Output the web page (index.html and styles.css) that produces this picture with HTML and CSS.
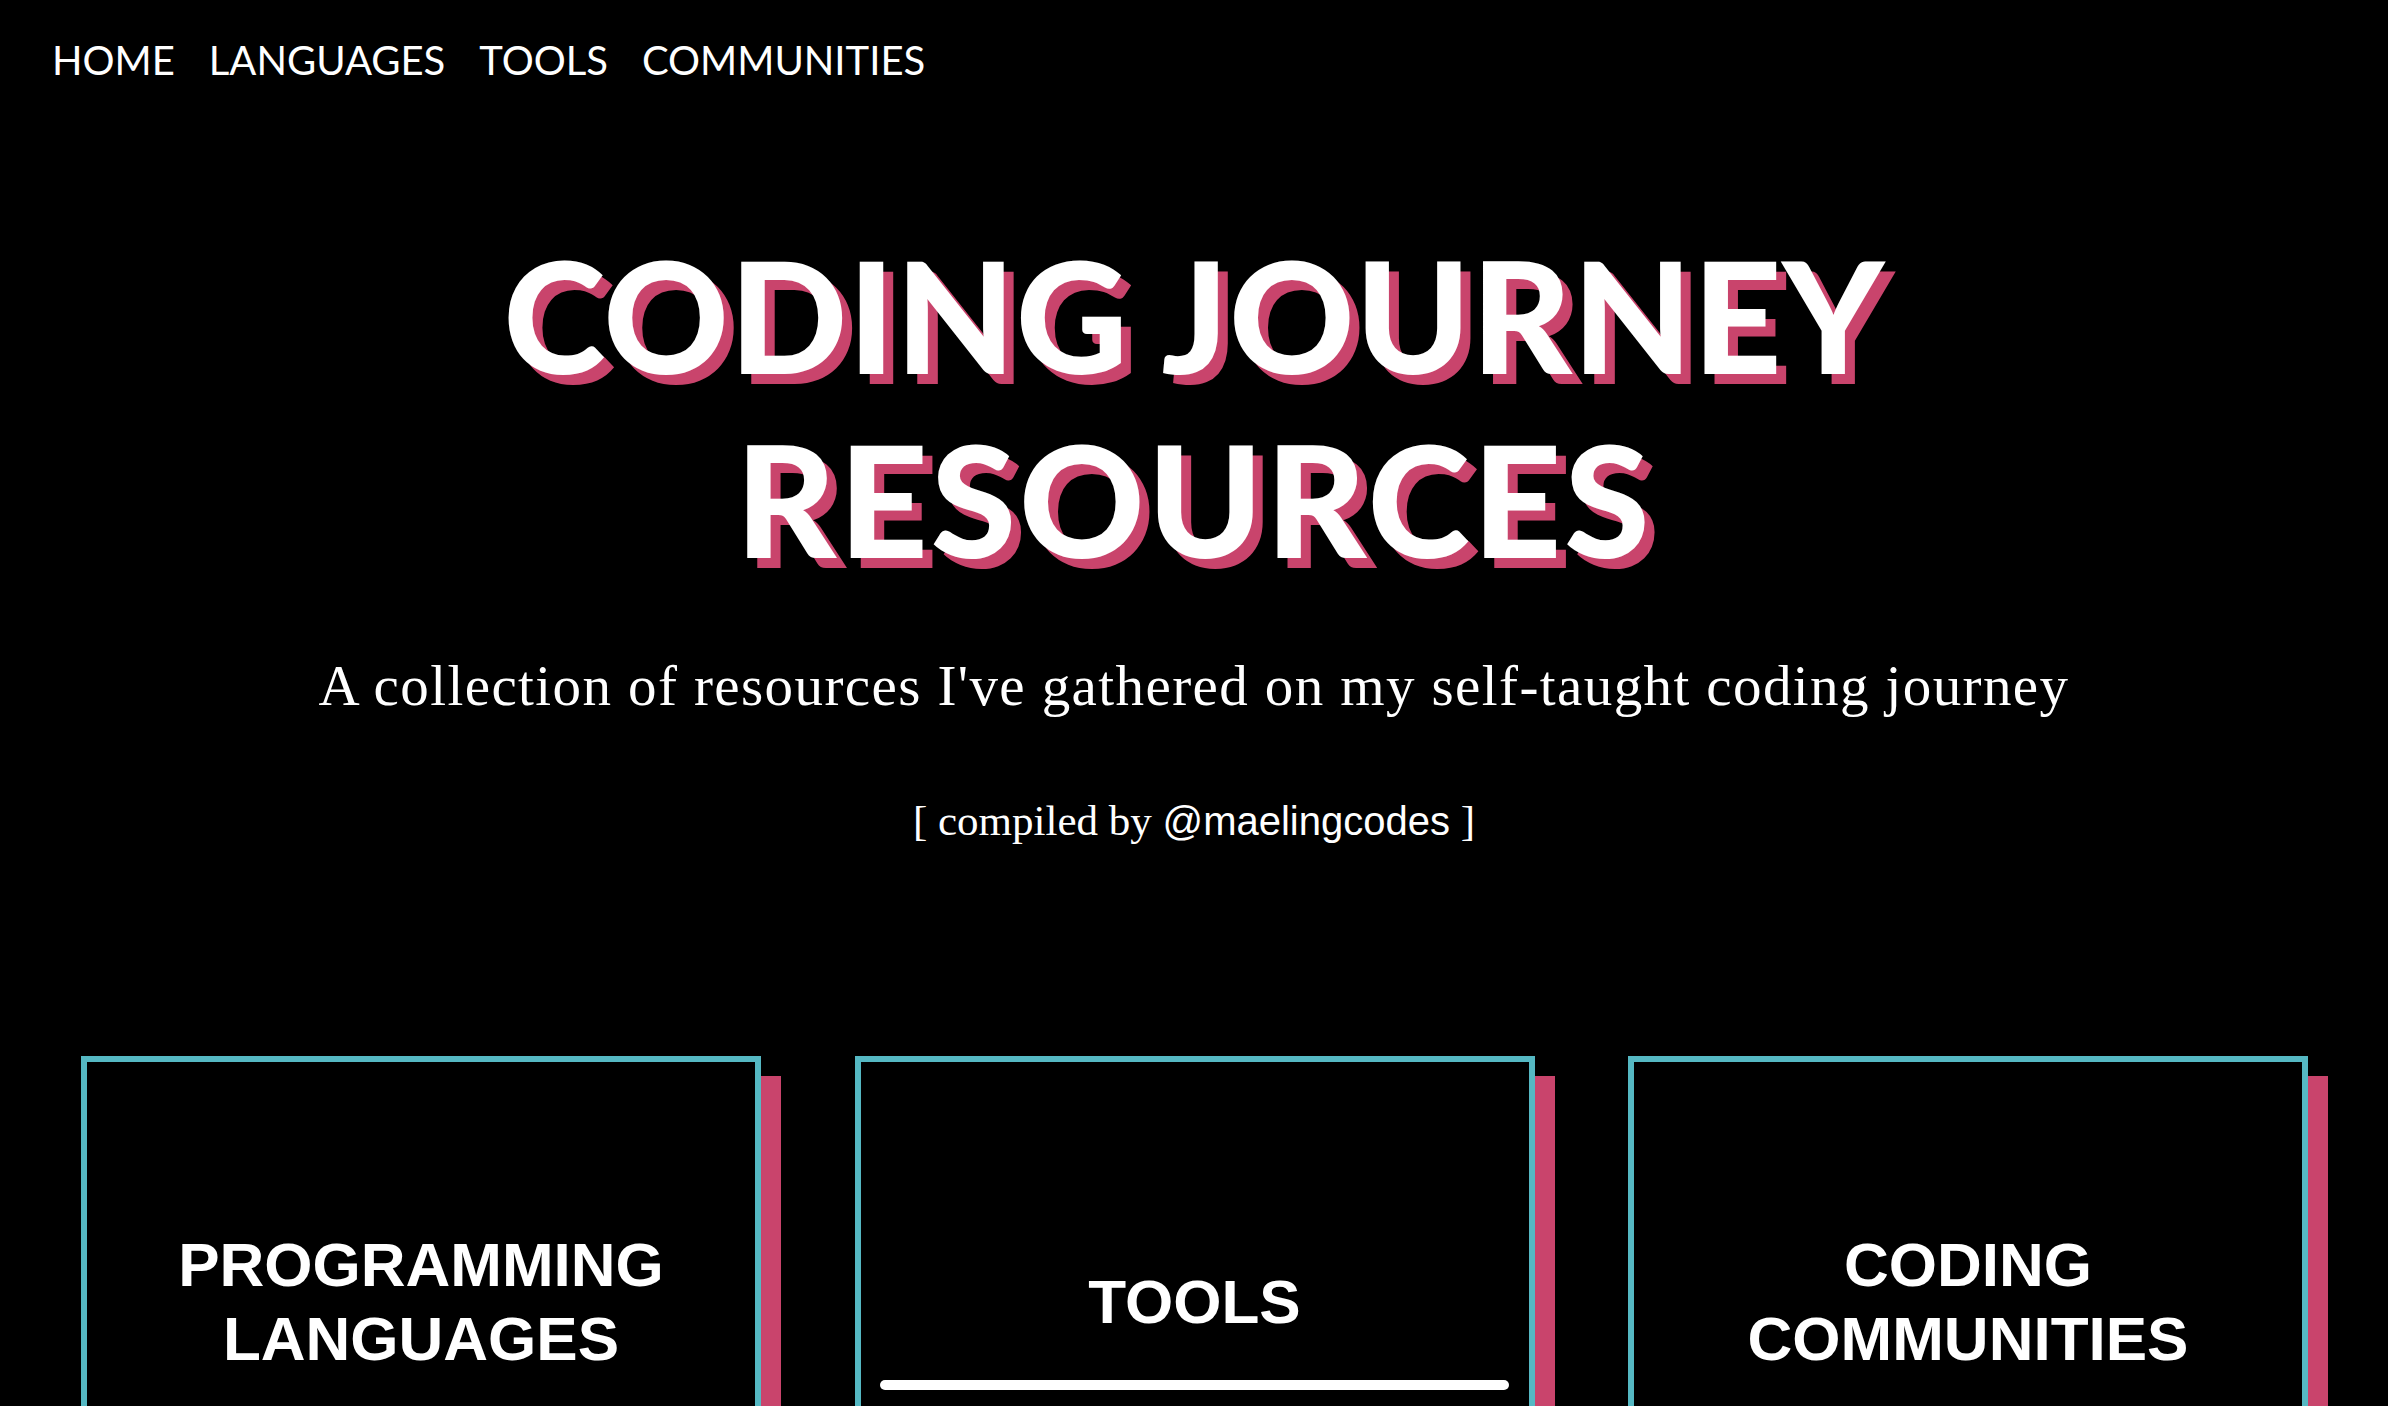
FILE: index.html
```html
<!DOCTYPE html>
<html lang="en">
<head>
<meta charset="utf-8">
<title>Coding Journey Resources</title>
<link rel="stylesheet" href="styles.css">
</head>
<body>
<nav class="topnav">
  <a class="navlink" href="#">HOME</a>
  <a class="navlink" href="#">LANGUAGES</a>
  <a class="navlink" href="#">TOOLS</a>
  <a class="navlink" href="#">COMMUNITIES</a>
</nav>
<header class="hero">
  <h1 class="title"><span class="title-line">CODING JOURNEY</span><br><span class="title-line title-line-wide">RESOURCES</span></h1>
  <p class="subtitle">A collection of resources I've gathered on my self-taught coding journey</p>
  <p class="credit">[ compiled by <a class="handle" href="#">@maelingcodes</a> ]</p>
</header>
<main class="cards">
  <a class="card" href="#"><h2 class="card-title">PROGRAMMING<br>LANGUAGES</h2></a>
  <a class="card card-active" href="#"><h2 class="card-title">TOOLS</h2></a>
  <a class="card" href="#"><h2 class="card-title">CODING<br>COMMUNITIES</h2></a>
</main>
</body>
</html>
```
FILE: styles.css
```css
html, body {
  margin: 0;
  padding: 0;
  background: #000;
  color: #fff;
}

a {
  color: #fff;
  text-decoration: none;
}

.topnav {
  display: flex;
  gap: 34px;
  padding: 36px 0 0 52px;
  font-family: "Lato", "Open Sans", sans-serif;
  font-size: 40px;
  line-height: 48px;
}

.hero {
  text-align: center;
}

.title {
  margin: 138px 0 0;
  font-family: "Lato", sans-serif;
  font-weight: 900;
  font-size: 155px;
  line-height: 184px;
  letter-spacing: 0.5px;
  color: #fff;
  text-shadow: 10px 10px 0 #c9446c;
}

.title-line-wide {
  letter-spacing: 2.8px;
}

.subtitle {
  margin: 62px 0 0;
  font-family: "Liberation Serif", serif;
  font-weight: 400;
  font-size: 57px;
  line-height: 67px;
  letter-spacing: 1.4px;
}

.credit {
  margin: 76px 0 0;
  font-family: "Liberation Serif", serif;
  font-size: 43px;
  line-height: 52px;
}

.handle {
  font-family: "Liberation Sans", Arial, sans-serif;
  font-size: 40px;
}

.cards {
  display: flex;
  justify-content: space-between;
  padding: 0 80px 0 81px;
  margin-top: 209px;
}

.card {
  position: relative;
  box-sizing: border-box;
  width: 680px;
  height: 492px;
  border: 6px solid #55b8c3;
  background: #000;
  box-shadow: 20px 20px 0 #c9446c;
  display: flex;
  align-items: center;
  justify-content: center;
}

.card-title {
  margin: 0;
  font-family: "Liberation Sans", Arial, sans-serif;
  font-weight: 700;
  font-size: 62px;
  line-height: 74px;
  text-align: center;
}

.card-active::after {
  content: "";
  position: absolute;
  left: 19px;
  right: 20px;
  top: 318px;
  height: 10px;
  border-radius: 5px;
  background: #fff;
}
```
